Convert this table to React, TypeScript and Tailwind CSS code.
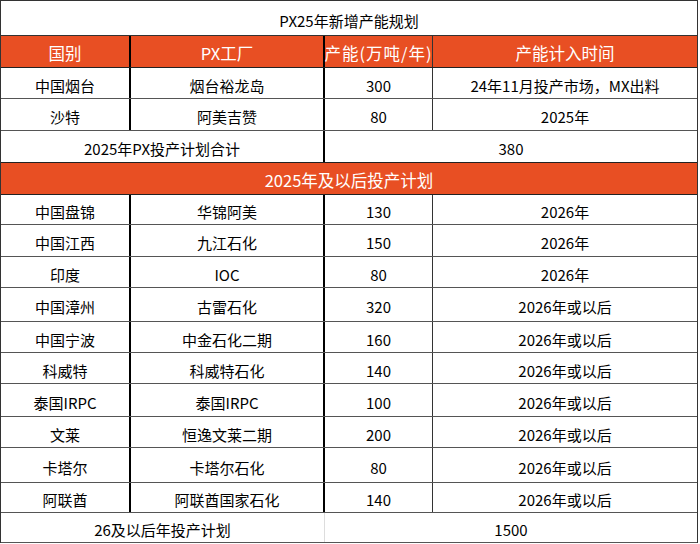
import React from "react";

const ORANGE = "bg-[#E84F23]";

type Row = { h: string; c: [string, string, string, string] };

const top: Row[] = [
  { h: "h-[31px]", c: ["中国烟台", "烟台裕龙岛", "300", "24年11月投产市场，MX出料"] },
  { h: "h-[32px]", c: ["沙特", "阿美吉赞", "80", "2025年"] },
];

const bottom: Row[] = [
  { h: "h-[30px]", c: ["中国盘锦", "华锦阿美", "130", "2026年"] },
  { h: "h-[32px]", c: ["中国江西", "九江石化", "150", "2026年"] },
  { h: "h-[31px]", c: ["印度", "IOC", "80", "2026年"] },
  { h: "h-[34px]", c: ["中国漳州", "古雷石化", "320", "2026年或以后"] },
  { h: "h-[31px]", c: ["中国宁波", "中金石化二期", "160", "2026年或以后"] },
  { h: "h-[31px]", c: ["科威特", "科威特石化", "140", "2026年或以后"] },
  { h: "h-[33px]", c: ["泰国IRPC", "泰国IRPC", "100", "2026年或以后"] },
  { h: "h-[31px]", c: ["文莱", "恒逸文莱二期", "200", "2026年或以后"] },
  { h: "h-[35px]", c: ["卡塔尔", "卡塔尔石化", "80", "2026年或以后"] },
  { h: "h-[30px]", c: ["阿联酋", "阿联酋国家石化", "140", "2026年或以后"] },
];

const cell = "flex items-center justify-center pt-[4px] whitespace-nowrap";

function DataRow({ r }: { r: Row }) {
  return (
    <div className={`flex ${r.h} border-b border-[#555]`}>
      <div className={`${cell} w-[130px] border-r-2 border-black`}>{r.c[0]}</div>
      <div className={`${cell} w-[194px] border-r-2 border-black`}>{r.c[1]}</div>
      <div className={`${cell} w-[108px] border-r border-[#333]`}>{r.c[2]}</div>
      <div className={`${cell} flex-1`}>{r.c[3]}</div>
    </div>
  );
}

export default function App() {
  return (
    <div
      className="w-[700px] h-[544px] bg-white text-black text-[15px] leading-none"
      style={{ fontFamily: '"Noto Sans CJK SC", "Noto Sans", sans-serif' }}
    >
      <div className="w-[698px] border-t border-l-[1.5px] border-r border-[#333]">
        <div className="flex h-[35px] border-b border-[#333]">
          <div className={`${cell} flex-1`}>PX25年新增产能规划</div>
        </div>
        <div className={`flex h-[32px] border-b border-[#222] ${ORANGE} text-white text-[16.5px]`}>
          <div className={`${cell} w-[130px] border-r-2 border-black`}>国别</div>
          <div className={`${cell} w-[194px] border-r-2 border-black`}>PX工厂</div>
          <div className={`${cell} w-[108px] border-r border-[#333] tracking-[1px]`}>产能(万吨/年)</div>
          <div className={`${cell} flex-1`}>产能计入时间</div>
        </div>
        {top.map((r, i) => (
          <DataRow key={i} r={r} />
        ))}
        <div className="flex h-[32px] border-b border-[#222]">
          <div className={`${cell} w-[324px] border-r-2 border-black`}>2025年PX投产计划合计</div>
          <div className={`${cell} flex-1`}>380</div>
        </div>
        <div className={`flex h-[32px] border-b border-[#222] ${ORANGE} text-white text-[16.5px]`}>
          <div className={`${cell} flex-1`}>2025年及以后投产计划</div>
        </div>
        {bottom.map((r, i) => (
          <DataRow key={i} r={r} />
        ))}
        <div className="flex h-[30px] border-b border-[#555]">
          <div className={`${cell} w-[324px] border-r border-[#ddd]`}>26及以后年投产计划</div>
          <div className={`${cell} flex-1`}>1500</div>
        </div>
      </div>
    </div>
  );
}
